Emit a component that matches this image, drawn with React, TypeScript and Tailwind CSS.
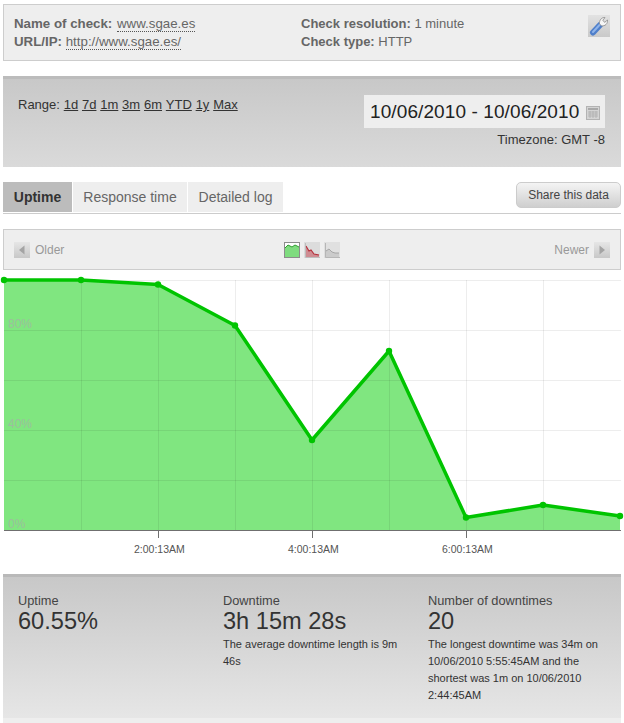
import React from 'react'

const ranges = ['1d', '7d', '1m', '3m', '6m', 'YTD', '1y', 'Max']

// chart coordinates are page px minus the chart origin (x 3, y 280)
const points: [number, number][] = [
  [1, 0], [78, 0], [155, 4.5], [232, 45.5], [309, 160], [386, 71], [463, 237.5], [540, 225], [617, 236],
]

function Wrench() {
  return (
    <div className="w-[22px] h-[22px] bg-gradient-to-b from-[#e2e2e2] to-[#c9c9c9] flex items-center justify-center">
      <svg width="20" height="20" viewBox="0 0 20 20">
        <path d="M4 16.5 L11 9" stroke="#4f7fca" strokeWidth="6" strokeLinecap="round" />
        <path d="M4 16 L10.5 9" stroke="#8fb4ea" strokeWidth="2" strokeLinecap="round" />
        <path d="M10.5 8 C10 4 13 1 16 1.6 L13.8 4.2 L15.6 6.4 L18.5 4 C19 7.5 16 10.5 12.5 9.8 Z" fill="#f6f6f6" stroke="#8a8a8a" strokeWidth="0.8" />
      </svg>
    </div>
  )
}

function ArrowBtn({ dir }: { dir: 'left' | 'right' }) {
  return (
    <div className="w-[16px] h-[16px] bg-gradient-to-b from-[#e6e6e6] to-[#c8c8c8] flex items-center justify-center">
      <svg width="8" height="10" viewBox="0 0 8 10">
        <path d={dir === 'left' ? 'M6.5 0.5 L1 5 L6.5 9.5 Z' : 'M1.5 0.5 L7 5 L1.5 9.5 Z'} fill="#a4a4a4" />
      </svg>
    </div>
  )
}

function AreaIcon() {
  return (
    <div className="w-[16px] h-[16px] border border-[#8c8c8c] bg-white">
      <svg width="14" height="14" viewBox="0 0 14 14" className="block">
        <path d="M0 5 L3 2 L7 4 L10 2 L14 4 V14 H0 Z" fill="#7fdc7f" />
        <path d="M0 5 L3 2 L7 4 L10 2 L14 4" fill="none" stroke="#2f9f2f" strokeWidth="1" />
      </svg>
    </div>
  )
}

function DownIcon() {
  return (
    <div className="w-[16px] h-[16px] bg-[#dcdcdc]">
      <svg width="16" height="16" viewBox="0 0 16 16" className="block">
        <path d="M2 4 L5 9 L7 8 L10 12 L15 13 V15 H2 Z" fill="#cf8c92" />
        <path d="M2 4 L5 9 L7 8 L10 12 L15 13" fill="none" stroke="#b52f3a" strokeWidth="1.1" />
        <path d="M1.5 1 V15.5 H16" fill="none" stroke="#b5b5b5" strokeWidth="0.8" />
      </svg>
    </div>
  )
}

function GrayIcon() {
  return (
    <div className="w-[16px] h-[16px] bg-[#e0e0e0]">
      <svg width="16" height="16" viewBox="0 0 16 16" className="block">
        <path d="M2 9 L5 7 L8 10 L11 11 L15 11 V15 H2 Z" fill="#cbcbcb" />
        <path d="M2 9 L5 7 L8 10 L11 11 L15 11" fill="none" stroke="#a6a6a6" strokeWidth="1" />
        <path d="M1.5 1 V15.5 H16" fill="none" stroke="#ababab" strokeWidth="0.8" />
      </svg>
    </div>
  )
}

function Chart() {
  const line = points.map(p => p.join(',')).join(' ')
  const area = `1,250 ${line} 617,250`
  return (
    <div className="relative h-[280px] mt-[10px]">
      <svg width="618" height="262" viewBox="0 0 618 262" className="block overflow-visible">
        <polygon points={area} fill="#80e680" />
        {[0, 50, 100, 150, 200].map(y => (
          <line key={y} x1="1" x2="618" y1={y + 0.5} y2={y + 0.5} stroke="#000" strokeOpacity="0.07" />
        ))}
        {[78, 155, 232, 309, 386, 463, 540].map(x => (
          <line key={x} x1={x + 0.5} x2={x + 0.5} y1="0" y2="250" stroke="#000" strokeOpacity="0.07" />
        ))}
        <polyline points={line} fill="none" stroke="#00c400" strokeWidth="3.5" strokeLinejoin="round" />
        {points.map(([x, y]) => (
          <circle key={x} cx={x} cy={y} r="3.2" fill="#00c400" />
        ))}
        <line x1="1" x2="618" y1="250.5" y2="250.5" stroke="#6f6f6f" />
        {[155, 309, 463].map(x => (
          <line key={x} x1={x + 0.5} x2={x + 0.5} y1="250" y2="258" stroke="#6f6f6f" />
        ))}
      </svg>
      <span className="absolute left-[5px] top-[38px] text-[12px] leading-[12px] text-[#9cbf9c]">80%</span>
      <span className="absolute left-[5px] top-[138px] text-[12px] leading-[12px] text-[#9cbf9c]">40%</span>
      <span className="absolute left-[5px] top-[238px] text-[12px] leading-[12px] text-[#9cbf9c]">0%</span>
      <span className="absolute left-[131px] top-[263px] text-[10.5px] leading-[12px] text-[#555]">2:00:13AM</span>
      <span className="absolute left-[285px] top-[263px] text-[10.5px] leading-[12px] text-[#555]">4:00:13AM</span>
      <span className="absolute left-[439px] top-[263px] text-[10.5px] leading-[12px] text-[#555]">6:00:13AM</span>
    </div>
  )
}

export default function App() {
  return (
    <div className="w-[624px] h-[723px] overflow-hidden bg-white pt-[4px] pl-[3px] pr-[3px] font-['Liberation_Sans',Arial,sans-serif] text-[#444]">
      {/* check details */}
      <div className="h-[57px] border border-[#cdcdcd] bg-[#eee] flex pl-[10px] pt-[10px] text-[13px] leading-[18px] text-[#666]">
        <div className="w-[287px] text-[13.3px]">
          <div><b>Name of check:</b> <span className="ml-[1px] border-b border-dotted border-[#555]">www.sgae.es</span></div>
          <div><b>URL/IP:</b> <span className="border-b border-dotted border-[#555]">http://www.sgae.es/</span></div>
        </div>
        <div className="flex-1">
          <div><b>Check resolution:</b> 1 minute</div>
          <div><b>Check type:</b> HTTP</div>
        </div>
        <div className="pr-[10px]"><Wrench /></div>
      </div>

      {/* date range */}
      <div className="h-[91px] mt-[15px] border-t-[3px] border-[#bcbcbc] bg-gradient-to-b from-[#c8c8c8] to-[#dadada] flex justify-between pl-[15px] pr-[16px] text-[#333]">
        <div className="text-[13px] leading-[18px] pt-[17px] flex gap-[3.8px]">
          <span>Range:</span>
          {ranges.map(r => (
            <a key={r} href="#" className="underline">{r}</a>
          ))}
        </div>
        <div className="pt-[16px] flex flex-col items-end">
          <div className="w-[241px] h-[33px] bg-[#eee] flex items-center pl-[6px] pt-[2px] gap-[7px] text-[19px] tracking-[0.1px] text-[#222] whitespace-nowrap">
            <span>10/06/2010 - 10/06/2010</span>
            <svg width="14" height="14" viewBox="0 0 14 14" className="shrink-0">
              <rect x="0.5" y="0.5" width="13" height="13" fill="#d4d4d4" stroke="#b3b3b3" />
              <rect x="2" y="2" width="10" height="2" fill="#a9a9a9" />
              <path d="M2 6H12M2 8H12M2 10H12M4 5V12M7 5V12M10 5V12" stroke="#a9a9a9" strokeWidth="0.7" />
            </svg>
          </div>
          <div className="text-[13px] leading-[18px] mt-[3px]">Timezone: GMT -8</div>
        </div>
      </div>

      {/* tabs */}
      <div className="mt-[15px] h-[32px] border-b-[1px] border-[#ccc] flex justify-between">
        <div className="flex gap-px h-[30px] text-[14px]">
          <div className="w-[69px] bg-[#bcbcbc] font-bold text-[#333] flex items-center justify-center">Uptime</div>
          <div className="w-[114px] bg-[#eee] text-[#666] flex items-center justify-center">Response time</div>
          <div className="w-[95px] bg-[#eee] text-[#666] flex items-center justify-center">Detailed log</div>
        </div>
        <button className="w-[105px] h-[26px] rounded-[5px] border border-[#ccc] bg-gradient-to-b from-[#f4f4f4] to-[#cfcfcf] text-[12px] text-[#444]">Share this data</button>
      </div>

      {/* chart toolbar */}
      <div className="mt-[15px] h-[41px] border border-[#cdcdcd] bg-[#eee] flex items-center justify-between px-[10px] text-[12px] text-[#999]">
        <div className="flex items-center gap-[5px] w-[100px]"><ArrowBtn dir="left" /><span>Older</span></div>
        <div className="flex items-center gap-[4px]">
          <AreaIcon />
          <DownIcon />
          <GrayIcon />
        </div>
        <div className="flex items-center justify-end gap-[5px] w-[100px]"><span>Newer</span><ArrowBtn dir="right" /></div>
      </div>

      <Chart />

      {/* summary */}
      <div className="h-[144px] mt-[14px] border-t-[3px] border-[#b9b9b9] bg-gradient-to-b from-[#c8c8c8] to-[#e6e6e6] grid grid-cols-[205px_205px_1fr] pl-[15px] pt-[16px] text-[#444]">
        <div>
          <div className="text-[12.8px] leading-[16px]">Uptime</div>
          <div className="text-[23.6px] leading-[24px] text-[#333]">60.55%</div>
        </div>
        <div>
          <div className="text-[12.8px] leading-[16px]">Downtime</div>
          <div className="text-[23.6px] leading-[24px] text-[#333]">3h 15m 28s</div>
          <p className="text-[11px] leading-[17px] mt-[3px] text-[#333] pr-[20px]">The average downtime length is 9m 46s</p>
        </div>
        <div>
          <div className="text-[12.8px] leading-[16px]">Number of downtimes</div>
          <div className="text-[23.6px] leading-[24px] text-[#333]">20</div>
          <p className="text-[11px] leading-[17px] mt-[3px] text-[#333] pr-[10px]">The longest downtime was 34m on 10/06/2010 5:55:45AM and the shortest was 1m on 10/06/2010 2:44:45AM</p>
        </div>
      </div>
      <div className="h-[5px] bg-[#eee]" />
    </div>
  )
}
